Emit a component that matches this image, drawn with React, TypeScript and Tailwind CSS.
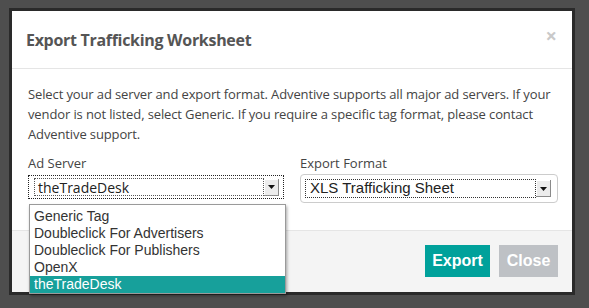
const options = [
  "Generic Tag",
  "Doubleclick For Advertisers",
  "Doubleclick For Publishers",
  "OpenX",
  "theTradeDesk",
];

const SelectArrow = () => (
  <div className="flex h-[17px] w-[15px] items-center justify-center bg-[#ececec] shadow-[inset_-1px_-1px_0_#8a8a8a,inset_1px_1px_0_#ffffff]">
    <svg width="7" height="4" viewBox="0 0 7 4">
      <path d="M0 0 H7 L3.5 4 Z" fill="#111" />
    </svg>
  </div>
);

export default function App() {
  return (
    <div className="relative h-[308px] w-[589px] overflow-hidden bg-[#4e4e4e] pl-[12px] pt-[11px] font-['Open_Sans',sans-serif]">
      <div className="flex h-[281px] w-[560px] flex-col bg-white shadow-[0_0_0_3px_#2a2a2a]">
        {/* Header */}
        <div className="flex h-[58px] shrink-0 items-center justify-between border-b border-[#e5e5e5] pl-[14px] pr-[15px]">
          <h2 className="text-[16px] font-bold tracking-[-0.3px] text-[#555]">
            Export Trafficking Worksheet
          </h2>
          <span className="-mt-[7px] text-[20px] font-bold leading-none text-[#c9c9c9]">
            ×
          </span>
        </div>

        {/* Body */}
        <div className="h-[161px] shrink-0 pl-[16px] pr-[10px] pt-[15px]">
          <p className="text-[13px] leading-[20px] tracking-[-0.12px] text-[#444]">
            Select your ad server and export format. Adventive supports all major ad servers. If your vendor is not
            listed, select Generic. If you require a specific tag format, please contact Adventive support.
          </p>
          <div className="mt-[10px] flex gap-[14px]">
            <div className="w-[258px]">
              <div className="text-[13px] leading-[18px] text-[#444]">Ad Server</div>
              <div className="mt-[3px] flex h-[24px] w-[256px] items-center border border-dotted border-[#222] pl-[5px] pr-[4px]">
                <div className="flex h-[18px] flex-1 items-center border border-dotted border-[#555] pl-[3px] text-[14px] text-[#222]">
                  theTradeDesk
                </div>
                <SelectArrow />
              </div>
            </div>
            <div className="w-[258px]">
              <div className="text-[13px] leading-[18px] text-[#444]">Export Format</div>
              <div className="mt-[2px] flex h-[29px] w-[258px] items-center rounded-[4px] border border-[#ccc] pl-[4px] pr-[6px]">
                <div className="flex h-[19px] flex-1 items-center border border-dotted border-[#333] pl-[4px] font-['Liberation_Sans',sans-serif] text-[15px] text-[#222]">
                  XLS Trafficking Sheet
                </div>
                <SelectArrow />
              </div>
            </div>
          </div>
        </div>

        {/* Footer */}
        <div className="flex flex-1 items-start justify-end gap-[9px] border-t border-[#e5e5e5] bg-[#f4f4f4] pr-[14px] pt-[14px] font-['Liberation_Sans',sans-serif]">
          <button className="h-[32px] w-[65px] bg-[#00a19b] text-[16px] font-bold text-white">Export</button>
          <button className="h-[32px] w-[59px] bg-[#bec1c5] text-[16px] font-bold text-white">Close</button>
        </div>
      </div>

      {/* Open dropdown list */}
      <ul className="absolute left-[29px] top-[204px] w-[257px] border border-[#9a9a9a] bg-white pt-[3px] font-['Liberation_Sans',sans-serif] text-[14px] text-[#333] shadow-[1px_2px_3px_rgba(0,0,0,0.35)]">
        {options.map((o) => (
          <li
            key={o}
            className={`h-[17px] pl-[4px] leading-[17px] ${o === "theTradeDesk" ? "bg-[#17a09b] text-white" : ""}`}
          >
            {o}
          </li>
        ))}
      </ul>
    </div>
  );
}
